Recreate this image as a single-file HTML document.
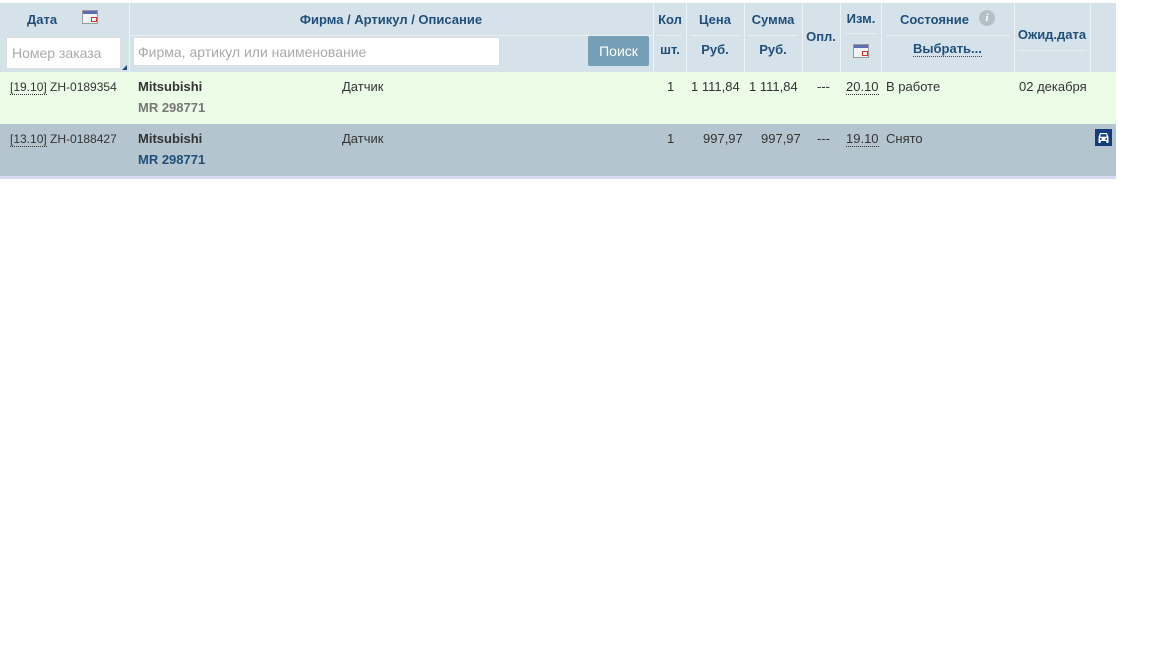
<!DOCTYPE html>
<html><head><meta charset="utf-8"><style>
body{margin:0;width:1152px;height:648px;background:#fff;font-family:"Liberation Sans",Arial,sans-serif;position:relative;overflow:hidden}
.a{position:absolute}
.hd{left:0;top:3px;width:1116px;height:69px;background:#d6e2e9}
.sep{top:3px;width:1px;height:69px;background:#eef3f6}
.h{color:#1f4f7a;font-size:13px;font-weight:bold;text-align:center}
.hl{height:1px;background:#e8eef2}
.t{font-size:13px;color:#333}
.cal{width:16px;height:14px;background:linear-gradient(#5a6fb0 0 3px,#f3f3f3 3px);border:1px solid #999;box-sizing:border-box}
.cal:after{content:"";position:absolute;left:8px;top:6px;width:4px;height:3px;border:1px solid #c33}
.dot{border-bottom:1px dotted #333}
</style></head><body>
<div class="a hd"></div>
<div class="a sep" style="left:129px"></div>
<div class="a sep" style="left:653px"></div>
<div class="a sep" style="left:686px"></div>
<div class="a sep" style="left:744px"></div>
<div class="a sep" style="left:802px"></div>
<div class="a sep" style="left:840px"></div>
<div class="a sep" style="left:881px"></div>
<div class="a sep" style="left:1014px"></div>
<div class="a sep" style="left:1090px"></div>
<div class="a h" style="left:27px;top:12px">Дата</div>
<div class="a cal" style="left:82px;top:10px"></div>
<div class="a h" style="left:129px;top:12px;width:524px">Фирма / Артикул / Описание</div>
<div class="a hl" style="left:130px;top:35px;width:523px"></div>
<div class="a" style="left:6px;top:37px;width:115px;height:32px;background:#fff;border:1px solid #ddd;box-sizing:border-box;font-size:14px;color:#aaa;padding:7px 0 0 5px">Номер заказа</div>
<div class="a" style="left:122px;top:65px;width:5px;height:5px;background:#1f4f7a;clip-path:polygon(100% 0,100% 100%,0 100%)"></div>
<div class="a" style="left:133px;top:37px;width:367px;height:29px;background:#fff;border:1px solid #ddd;box-sizing:border-box;font-size:14px;color:#aaa;padding:6px 0 0 4px">Фирма, артикул или наименование</div>
<div class="a" style="left:588px;top:36px;width:61px;height:30px;background:#749fb6;color:#fff;font-size:14px;text-align:center;line-height:30px;border-radius:2px">Поиск</div>
<div class="a h" style="left:654px;top:12px;width:32px">Кол</div>
<div class="a h" style="left:654px;top:42px;width:32px;font-weight:bold">шт.</div>
<div class="a h" style="left:686px;top:12px;width:58px">Цена</div>
<div class="a h" style="left:686px;top:42px;width:58px">Руб.</div>
<div class="a h" style="left:744px;top:12px;width:58px">Сумма</div>
<div class="a h" style="left:744px;top:42px;width:58px">Руб.</div>
<div class="a hl" style="left:657px;top:35px;width:24px"></div>
<div class="a hl" style="left:690px;top:35px;width:50px"></div>
<div class="a hl" style="left:748px;top:35px;width:50px"></div>
<div class="a h" style="left:802px;top:29px;width:38px">Опл.</div>
<div class="a h" style="left:841px;top:11px;width:40px">Изм.</div>
<div class="a hl" style="left:845px;top:33px;width:32px"></div>
<div class="a cal" style="left:853px;top:44px"></div>
<div class="a h" style="left:882px;top:12px;width:105px">Состояние</div>
<div class="a" style="left:979px;top:10px;width:16px;height:16px;border-radius:50%;background:#b5c0c6;color:#fff;font:italic bold 11px 'Liberation Serif',serif;text-align:center;line-height:16px">i</div>
<div class="a hl" style="left:886px;top:35px;width:124px"></div>
<div class="a h" style="left:913px;top:42px;border-bottom:1px dotted #1f4f7a;line-height:14px">Выбрать...</div>
<div class="a h" style="left:1014px;top:27px;width:76px">Ожид.дата</div>
<div class="a hl" style="left:1018px;top:50px;width:68px"></div>

<div class="a" style="left:0;top:72px;width:1116px;height:52px;background:#ebfde7"></div>
<div class="a" style="left:0;top:124px;width:1116px;height:52px;background:#b4c5cf"></div>
<div class="a" style="left:0;top:176px;width:1116px;height:3px;background:#d3dbf2"></div>

<div class="a t" style="left:10px;top:80px;font-size:12px"><span class="dot">[19.10]</span> ZH-0189354</div>
<div class="a t" style="left:138px;top:79px;font-weight:bold">Mitsubishi</div>
<div class="a t" style="left:138px;top:100px;font-weight:bold;color:#777">MR 298771</div>
<div class="a t" style="left:342px;top:79px">Датчик</div>
<div class="a t" style="left:667px;top:79px">1</div>
<div class="a t" style="left:691px;top:79px">1 111,84</div>
<div class="a t" style="left:749px;top:79px">1 111,84</div>
<div class="a t" style="left:817px;top:79px">---</div>
<div class="a t" style="left:846px;top:79px"><span class="dot">20.10</span></div>
<div class="a t" style="left:886px;top:79px">В работе</div>
<div class="a t" style="left:1019px;top:79px">02 декабря</div>

<div class="a t" style="left:10px;top:132px;font-size:12px"><span class="dot">[13.10]</span> ZH-0188427</div>
<div class="a t" style="left:138px;top:131px;font-weight:bold">Mitsubishi</div>
<div class="a t" style="left:138px;top:152px;font-weight:bold;color:#1f4f7a">MR 298771</div>
<div class="a t" style="left:342px;top:131px">Датчик</div>
<div class="a t" style="left:667px;top:131px">1</div>
<div class="a t" style="left:703px;top:131px">997,97</div>
<div class="a t" style="left:761px;top:131px">997,97</div>
<div class="a t" style="left:817px;top:131px">---</div>
<div class="a t" style="left:846px;top:131px"><span class="dot">19.10</span></div>
<div class="a t" style="left:886px;top:131px">Снято</div>
<svg class="a" style="left:1095px;top:129px" width="17" height="17" viewBox="0 0 17 17"><rect width="17" height="17" fill="#153d7a"/><path d="M3.5 8 L5 4 H12 L13.5 8 V12 H3.5 Z" fill="#fff"/><rect x="5.5" y="5.2" width="6" height="2.5" fill="#153d7a"/><circle cx="5.8" cy="10" r="1" fill="#153d7a"/><circle cx="11.2" cy="10" r="1" fill="#153d7a"/><rect x="3.5" y="12" width="2.2" height="2" fill="#fff"/><rect x="11.3" y="12" width="2.2" height="2" fill="#fff"/></svg>
</body></html>
